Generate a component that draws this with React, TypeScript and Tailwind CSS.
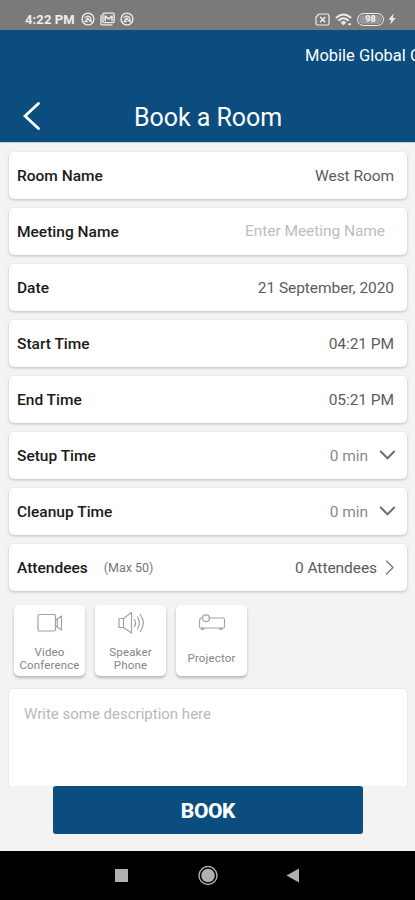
import React, { useState } from 'react';

const stroke = { fill: 'none', stroke: 'currentColor', strokeLinecap: 'round', strokeLinejoin: 'round' } as const;

function SyncIcon() {
  return (
    <svg className="w-3.5 h-3.5" viewBox="0 0 14 14" {...stroke} strokeWidth="1.4">
      <circle cx="7" cy="7" r="5.9" />
      <path d="M3.8 5.6 Q7.2 2.4 9.6 5.8 L10.2 9.6 M4 9.6 L6.8 6 L9 9.2 M4 9.6 H6.6" strokeWidth="1.3" />
    </svg>
  );
}

function GalleryIcon() {
  return (
    <svg className="w-[15px] h-3.5" viewBox="0 0 15 14" {...stroke} strokeWidth="1.3">
      <path d="M1 3.5 V12.8 H12" />
      <rect x="3" y="1.2" width="11.2" height="9.4" rx="1" />
      <path d="M5.2 8.5 V4 L8.6 6.8 L12 4 V8.5" strokeWidth="1.6" />
    </svg>
  );
}

function StatusBar() {
  return (
    <div className="h-[30px] pt-2 bg-[#7a7a7a] text-[#ededed] flex items-center justify-between pl-[25px] pr-[19px]">
      <div className="flex items-center">
        <span className="text-[13px] font-bold leading-none w-[50px] whitespace-nowrap tracking-[0.1px]">4:22 PM</span>
        <div className="flex items-center gap-[5px] ml-1.5">
          <SyncIcon />
          <GalleryIcon />
          <SyncIcon />
        </div>
      </div>
      <div className="flex items-center">
        <svg className="w-[15px] h-[13px] -ml-px" viewBox="0 0 15 13" {...stroke} strokeWidth="1.2">
          <path d="M4 1 H12.3 Q14 1 14 2.7 V10.3 Q14 12 12.3 12 H2.7 Q1 12 1 10.3 V4 Z" />
          <path d="M5.6 4.4 L9.8 8.8 M9.8 4.4 L5.6 8.8" strokeWidth="1.5" />
        </svg>
        <svg className="w-[18px] h-[13px] ml-[5px]" viewBox="0 0 18 13" {...stroke} strokeWidth="2">
          <path d="M1.5 4.4 Q8.5 -1.4 15.5 4.4 M4 7.2 Q8.5 3.4 13 7.2" />
          <path d="M6 9.2 Q8.5 7.2 11 9.2 L8.5 12 Z" fill="currentColor" strokeWidth="0.5" />
          <path d="M14.2 11.2 H15" />
        </svg>
        <div className="ml-1 w-[27px] h-[13px] border border-current rounded-full p-px">
          <div className="h-full rounded-full bg-[#969696] text-[#f5f5f5] text-[9px] font-bold leading-[9px] text-center">98</div>
        </div>
        <svg className="w-2 h-3 ml-1" viewBox="0 0 8 12" fill="currentColor">
          <path d="M5.5 0.5 L0.5 6.7 H3.3 L2 11.6 L7.8 5 H4.8 Z" />
        </svg>
      </div>
    </div>
  );
}

function Header() {
  return (
    <div className="h-28 bg-[#0b4d7e] text-white overflow-hidden">
      {/* scrolling company name, runs past the right edge */}
      <div className="h-[52px] pl-[305px] whitespace-nowrap text-[16.5px] leading-[52px]">Mobile Global Conference</div>
      <div className="h-[60px] flex items-center pl-[22px] pt-2">
        <svg className="w-5 h-8" viewBox="0 0 20 32" {...stroke} strokeWidth="2.8">
          <path d="M16.5 3.5 L3 16 L16.5 28.5" strokeLinejoin="miter" />
        </svg>
        <h1 className="ml-[92px] pt-1 text-[25px] leading-8 whitespace-nowrap tracking-[-0.05px]">Book a Room</h1>
      </div>
    </div>
  );
}

function Chevron({ direction }: { direction: 'down' | 'right' }) {
  if (direction === 'down') {
    return (
      <svg className="w-[17px] h-[11px] ml-[11px] -mr-0.5 text-[#6e6e6e]" viewBox="0 0 17 11" {...stroke} strokeWidth="2">
        <path d="M1.8 1.5 L8.5 8.2 L15.2 1.5" />
      </svg>
    );
  }
  return (
    <svg className="w-[9px] h-4 ml-2 text-[#707070]" viewBox="0 0 9 16" {...stroke} strokeWidth="1.2">
      <path d="M1.5 1 L8 7.5 L1.5 14" />
    </svg>
  );
}

function Row({ label, note, children }: { label: string; note?: string; children: React.ReactNode }) {
  return (
    <div className="h-[47px] bg-white rounded-[5px] shadow-[0_1px_3px_rgba(0,0,0,0.22)] flex items-center justify-between pl-2 pr-[13px] text-[15.5px] leading-6 text-[#5c5c5c]">
      <div className="flex items-center whitespace-nowrap">
        <span className="font-medium text-[#1a1a1a]">{label}</span>
        {note && <span className="ml-4 text-[12.5px] text-[#777777]">{note}</span>}
      </div>
      <div className="flex items-center whitespace-nowrap tracking-[-0.06px]">{children}</div>
    </div>
  );
}

function Tile({ label, children }: { label: string; children: React.ReactNode }) {
  return (
    <button className="w-[71px] h-[71px] bg-white rounded-[5px] shadow-[0_2px_3px_rgba(0,0,0,0.25)] flex flex-col items-center pt-1.5 text-[#a2a2a2]">
      {children}
      <span className="h-8 mt-2 flex items-center whitespace-pre-line text-[11.5px] leading-[13.5px] text-[#858585] tracking-[0.15px]">{label}</span>
    </button>
  );
}

export default function App() {
  const [meetingName, setMeetingName] = useState('');
  const [description, setDescription] = useState('');

  return (
    <div className="h-[900px] bg-[#f3f3f3] font-['Roboto',sans-serif] overflow-hidden flex flex-col">
      <StatusBar />
      <Header />

      <div className="flex-1 min-h-0 border-t border-[#c5d1db] px-2 pl-[9px] pt-[9px] overflow-hidden">
        <div className="flex flex-col gap-[9px]">
          <Row label="Room Name">West Room</Row>
          <Row label="Meeting Name">
            <input
              value={meetingName}
              onChange={e => setMeetingName(e.target.value)}
              placeholder="Enter Meeting Name"
              className="w-48 mr-[9px] pb-0.5 text-right outline-none placeholder:text-[#bdbdbd]"
            />
          </Row>
          <Row label="Date">21 September, 2020</Row>
          <Row label="Start Time">04:21 PM</Row>
          <Row label="End Time">05:21 PM</Row>
          <Row label="Setup Time"><span className="text-[#888888]">0 min</span><Chevron direction="down" /></Row>
          <Row label="Cleanup Time"><span className="text-[#888888]">0 min</span><Chevron direction="down" /></Row>
          <Row label="Attendees" note="(Max 50)"><span>0 Attendees</span><Chevron direction="right" /></Row>
        </div>

        <div className="flex gap-2.5 mt-3.5 ml-[5px]">
          <Tile label={'Video\nConference'}>
            <svg className="w-7 h-6" viewBox="0 0 28 24" {...stroke} strokeWidth="1.2">
              <rect x="2" y="3.5" width="17.5" height="16.5" rx="1.5" />
              <path d="M19.5 9 L21.3 8 V16 L19.5 15 M21.3 8 L25.5 5 V19 L21.3 16" />
            </svg>
          </Tile>
          <Tile label={'Speaker\nPhone'}>
            <svg className="w-7 h-6" viewBox="0 0 28 24" {...stroke} strokeWidth="1.2">
              <path d="M2 7.5 H6.5 L14.5 1.5 V22 L6.5 16.5 H2 Z M6.5 7.5 V16.5" />
              <path d="M17.5 8.5 Q19.7 12 17.5 15.5 M20.5 6 Q24.2 12 20.5 18 M23.3 3.5 Q29.3 12 23.3 20.5" />
            </svg>
          </Tile>
          <Tile label="Projector">
            <svg className="w-7 h-6" viewBox="0 0 28 24" {...stroke} strokeWidth="1.2">
              <path d="M4.8 6.5 Q1.5 7 1.5 10 V15.5 Q1.5 17 3 17 H25 Q26.5 17 26.5 15.5 V8.5 Q26.5 7 25 7 H11.2" />
              <circle cx="8" cy="7.2" r="3.4" />
              <path d="M3.5 17 V18.5 H5.5 V17 M22 17 V18.5 H24 V17" />
            </svg>
          </Tile>
        </div>

        <textarea
          value={description}
          onChange={e => setDescription(e.target.value)}
          placeholder="Write some description here"
          className="block w-full h-[98px] mt-[13px] bg-white rounded-t-[4px] shadow-[0_0_2px_rgba(0,0,0,0.15)] pl-[15px] pt-3.5 text-[15px] resize-none outline-none placeholder:text-[#b9b9b9]"
        />
      </div>

      <div className="h-[65px] bg-[#f3f3f3] pl-[53px] pr-[52px]">
        <button className="w-full h-12 rounded-[3px] bg-[#0b4d7e] text-white text-[21px] font-extrabold tracking-[-0.4px] pt-1">BOOK</button>
      </div>

      <div className="h-[49px] bg-black flex justify-center items-center text-[#b0b0b0]">
        <svg className="w-[186px] h-5 mr-0.5" viewBox="0 0 186 20" fill="currentColor">
          <rect x="1" y="3" width="13" height="13" />
          <circle cx="94" cy="9.5" r="6.8" />
          <circle cx="94" cy="9.5" r="9" fill="none" stroke="currentColor" strokeWidth="1.4" />
          <path d="M172.5 9.5 L185 2.5 V16.5 Z" />
        </svg>
      </div>
    </div>
  );
}
